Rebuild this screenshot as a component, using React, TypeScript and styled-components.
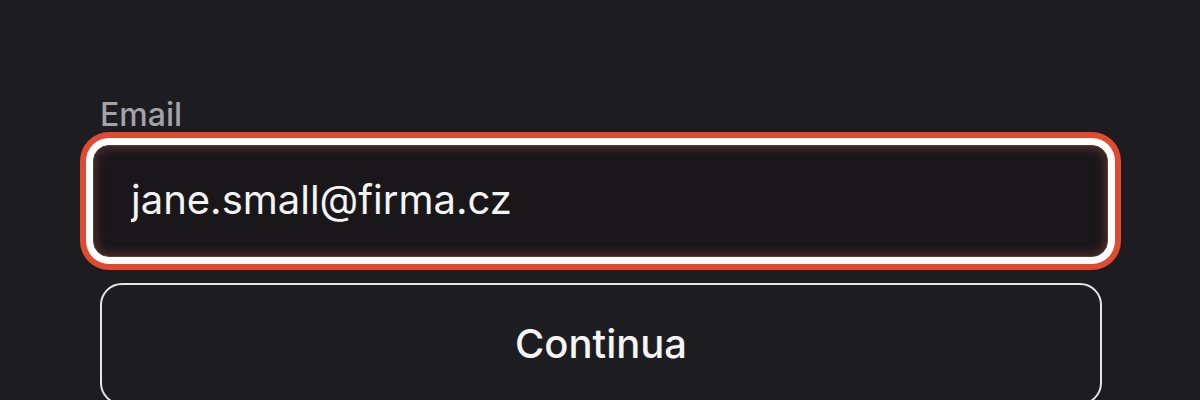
import styled, { createGlobalStyle } from "styled-components";

const GlobalStyle = createGlobalStyle`
  html, body {
    margin: 0;
    padding: 0;
    background: #1d1c20;
  }
  * {
    box-sizing: border-box;
  }
`;

const Page = styled.div`
  width: 1200px;
  height: 400px;
  overflow: hidden;
  background: #1d1c20;
  font-family: Inter, "Liberation Sans", sans-serif;
  padding: 96px 98px 0 100px;
`;

const Form = styled.form`
  display: flex;
  flex-direction: column;
  width: 1002px;
`;

const Label = styled.label`
  font-size: 32px;
  font-weight: 500;
  line-height: 38px;
  color: #a3a2a7;
  margin-bottom: 11px;
`;

const Input = styled.input`
  width: 1015px;
  height: 112px;
  margin-left: -7px;
  padding: 0 37px 4px;
  border-radius: 16px;
  border: 1.5px solid #5a3d3c;
  background: #19171a;
  box-shadow: inset 0 0 8px 3px rgba(120, 60, 58, 0.55), 0 0 0 7px #ffffff,
    0 0 0 13px #e04a2e;
  color: #f4f4f5;
  font-family: Inter, "Liberation Sans", sans-serif;
  font-size: 40px;
  outline: none;
`;

const Button = styled.button`
  margin-top: 26px;
  width: 1002px;
  height: 122px;
  border: 2px solid #e6e6e8;
  border-radius: 22px;
  background: transparent;
  color: #f5f5f6;
  font-family: Inter, "Liberation Sans", sans-serif;
  font-size: 40px;
  font-weight: 500;
  padding-bottom: 2px;
  cursor: pointer;
`;

const App = () => {
  return (
    <Page>
      <GlobalStyle />
      <Form onSubmit={(e) => e.preventDefault()}>
        <Label htmlFor="email">Email</Label>
        <Input id="email" type="email" defaultValue="jane.small@firma.cz" />
        <Button type="submit">Continua</Button>
      </Form>
    </Page>
  );
};

export default App;
